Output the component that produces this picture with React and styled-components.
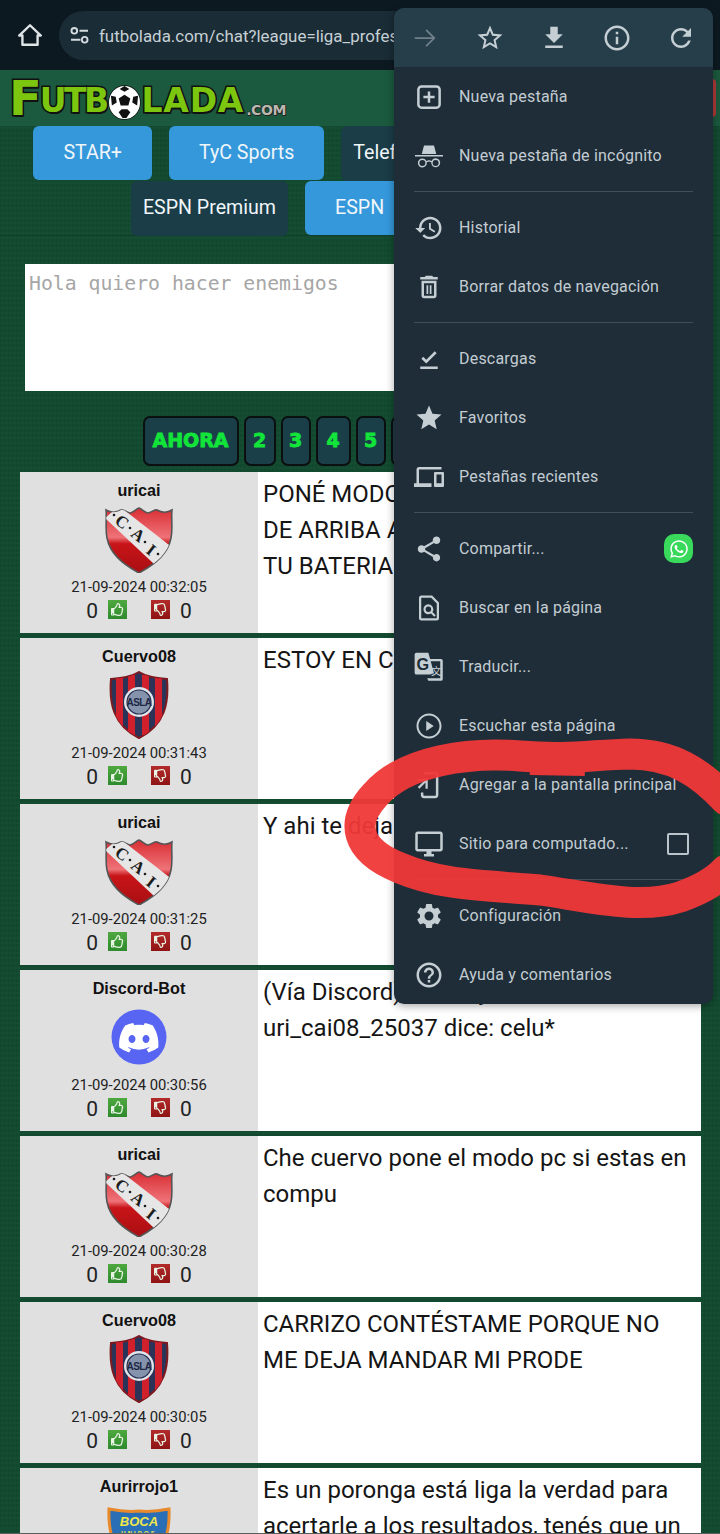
import React from "react";
import styled, { createGlobalStyle } from "styled-components";
import { FaWhatsapp, FaRegThumbsUp, FaRegThumbsDown } from "react-icons/fa";

const GlobalStyle = createGlobalStyle`
  html, body { margin: 0; padding: 0; background: #124a30; }
  * { box-sizing: border-box; }
`;

const Page = styled.div`
  position: relative;
  width: 720px;
  height: 1534px;
  overflow: hidden;
  font-family: Roboto, "Liberation Sans", sans-serif;
  background-color: #124a30;
  background-image: repeating-linear-gradient(90deg, rgba(0,0,0,.035) 0 1px, transparent 1px 4px),
    repeating-linear-gradient(0deg, rgba(255,255,255,.015) 0 2px, transparent 2px 5px);
`;

const TopBar = styled.div`
  height: 70px;
  background: #0d1921;
  display: flex;
  align-items: center;
  padding: 0 0 0 17px;
  gap: 16px;
`;

const HomeIcon = styled.svg`
  width: 26px;
  height: 26px;
  flex: none;
  fill: none;
  stroke: #dfe4e6;
  stroke-width: 2.2;
  stroke-linejoin: round;
`;

const AddressPill = styled.div`
  width: 500px;
  height: 49px;
  margin-top: 1px;
  border-radius: 25px;
  background: #1a2c36;
  display: flex;
  align-items: center;
  padding-left: 11px;
  gap: 10px;
`;

const TuneIcon = styled.svg`
  width: 19px;
  height: 17px;
  flex: none;
  fill: none;
  stroke: #d4dcdf;
  stroke-width: 2;
`;

const UrlText = styled.span`
  font-size: 16.9px;
  color: #c6d0d5;
  white-space: nowrap;
`;

const SiteHeader = styled.div`
  height: 56px;
  background: #1b5a3e;
  display: flex;
  align-items: center;
  justify-content: space-between;
  padding: 0 4px 0 12px;
`;

const Logo = styled.div`
  display: flex;
  align-items: flex-end;
  height: 42px;
  font-family: "DejaVu Sans", sans-serif;
  font-weight: 700;
  color: #7cc60f;
  -webkit-text-stroke: 3px #111;
  paint-order: stroke fill;
  text-shadow: 1px 2px 0 #111;
  white-space: nowrap;
`;

const LogoBig = styled.span`
  font-size: 48px;
  line-height: 42px;
  letter-spacing: -2px;
  margin-left: -3px;
`;

const LogoMid = styled.span`
  font-size: 33px;
  line-height: 36px;
  letter-spacing: ${({ $tight }) => ($tight ? "-2.6px" : "0.8px")};
`;

const LogoBall = styled.svg`
  width: 33px;
  height: 35px;
  flex: none;
  margin: 0 0 -1px 2px;
`;

const LogoCom = styled.span`
  font-size: 14px;
  line-height: 18px;
  margin-left: 2px;
  letter-spacing: -0.4px;
  color: #b9b9b0;
  -webkit-text-stroke: 1.2px #222;
  text-shadow: 1px 1px 0 #222;
`;

const HeaderButton = styled.div`
  width: 30px;
  height: 38px;
  border-radius: 4px;
  background: #b03a3a;
`;

const Channels = styled.div`
  display: flex;
  flex-direction: column;
  height: 110px;
  border-bottom: 1px solid #0f3f29;
`;

const ChannelRow = styled.div`
  display: flex;
  justify-content: center;
  gap: 17px;
`;

const ChannelButton = styled.div`
  height: ${({ $dark }) => ($dark ? "55px" : "54px")};
  padding: 0 ${({ $dark }) => ($dark ? "12px" : "30px")} 2px;
  width: ${({ $w }) => ($w ? `${$w}px` : "auto")};
  border-radius: 6px;
  display: flex;
  align-items: center;
  justify-content: center;
  font-size: 19.6px;
  color: #f0f6fa;
  white-space: nowrap;
  background: ${({ $dark }) => ($dark ? "#1a3d47" : "#3498db")};
`;

const Composer = styled.div`
  padding: 28px 25px 0;
`;

const MessageBox = styled.textarea`
  display: block;
  width: 670px;
  height: 127px;
  padding: 8px 4px;
  border: 0;
  border-radius: 0;
  outline: 0;
  resize: none;
  background: #fff;
  font-family: "DejaVu Sans Mono", monospace;
  font-size: 19.8px;
  line-height: 24px;
  &::placeholder { color: #a6a6a6; opacity: 1; }
`;

const Pager = styled.div`
  display: flex;
  justify-content: center;
  gap: 5px;
  padding-top: 25px;
  height: 81px;
`;

const PageButton = styled.div`
  width: ${({ $w }) => $w}px;
  height: 50px;
  padding-bottom: 2px;
  border: 2px solid #0b0f10;
  border-radius: 7px;
  background: #1b3f49;
  display: flex;
  align-items: center;
  justify-content: center;
  font-family: "DejaVu Sans", sans-serif;
  font-weight: 700;
  font-size: 19px;
  color: #12e43a;
  -webkit-text-stroke: 0.8px #12e43a;
`;

const ChatList = styled.div`
  display: flex;
  flex-direction: column;
  gap: 5px;
  padding: 0 19px 0 20px;
`;

const ChatRow = styled.div`
  display: grid;
  grid-template-columns: 238px 1fr;
  height: 161px;
  flex: none;
`;

const UserColumn = styled.div`
  background: #e0e0e0;
  display: flex;
  flex-direction: column;
  align-items: center;
  padding-top: 8px;
`;

const UserName = styled.div`
  font-family: "Liberation Sans", Arial, sans-serif;
  font-weight: 700;
  font-size: 16.2px;
  line-height: 20px;
  color: #111;
`;

const BadgeSlot = styled.div`
  height: 71px;
  margin-top: 3px;
  display: flex;
  align-items: center;
  justify-content: center;
`;

const Badge = styled.svg`
  width: 68px;
  height: 68px;
  display: block;
`;

const PostDate = styled.div`
  font-size: 14.8px;
  line-height: 18px;
  margin-top: 4px;
  color: #222;
`;

const Votes = styled.div`
  display: flex;
  align-items: center;
  margin-top: 4px;
  height: 22px;
  font-size: 21px;
  color: #222;
`;

const VoteIcon = styled.div`
  width: 19px;
  height: 19px;
  display: flex;
  align-items: center;
  justify-content: center;
  font-size: 13px;
  color: #e8f4e4;
  margin: ${({ $up }) => ($up ? "-3px 24px 0 10px" : "-3px 10px 0 0")};
  background: ${({ $up }) =>
    $up ? "linear-gradient(#4fa83f, #2d8a2d)" : "linear-gradient(#b32a2a, #8f1414)"};
`;

const MessageColumn = styled.div`
  background: #fff;
  padding: 4px 6px 0 5px;
  font-size: 24px;
  line-height: 36px;
  color: #151515;
  overflow: hidden;
  white-space: pre-line;
`;

const Menu = styled.div`
  position: absolute;
  left: 394px;
  top: 8px;
  width: 319px;
  height: 996px;
  border-radius: 10px;
  overflow: hidden;
  background: #1e2d38;
  box-shadow: 0 2px 8px rgba(0,0,0,.35);
`;

const MenuToolbar = styled.div`
  height: 59px;
  background: #263e4a;
  display: flex;
  align-items: center;
  justify-content: space-between;
  padding: 0 17px;
`;

const MenuIcon = styled.svg`
  width: 30px;
  height: 30px;
  flex: none;
  fill: ${({ $dim }) => ($dim ? "#6f8089" : "#c4ced3")};
`;

const MenuItemRow = styled.div`
  height: 59px;
  display: flex;
  align-items: center;
  padding: 0 20px;
  gap: 15px;
`;

const MenuLabel = styled.span`
  flex: 1;
  font-size: 16px;
  letter-spacing: 0.2px;
  color: #c3ccd2;
  white-space: nowrap;
`;

const MenuDivider = styled.div`
  height: 1px;
  margin: 6px 20px;
  background: #3f4f59;
`;

const WhatsAppBadge = styled.div`
  width: 29px;
  height: 29px;
  border-radius: 10px;
  background: #39d95c;
  color: #fff;
  display: flex;
  align-items: center;
  justify-content: center;
  font-size: 20px;
`;

const MenuCheckbox = styled.div`
  width: 22px;
  height: 22px;
  margin-right: 4px;
  border: 2px solid #b9c4cb;
  border-radius: 2px;
`;

const Scribble = styled.svg`
  position: absolute;
  inset: 0;
  width: 720px;
  height: 1534px;
  pointer-events: none;
`;

const NavLine = styled.div`
  position: absolute;
  left: 0;
  right: 0;
  bottom: 0;
  height: 1px;
  background: #55605c;
`;

const Icon = ({ d, children, dim }) => (
  <MenuIcon viewBox="0 0 24 24" $dim={dim}>
    {d && <path d={d} />}
    {children}
  </MenuIcon>
);

const icons = {
  star: "M22 9.24l-7.19-.62L12 2 9.19 8.63 2 9.24l5.46 4.73L5.82 21 12 17.27 18.18 21l-1.63-7.03L22 9.24zM12 15.4l-3.76 2.27 1-4.28-3.32-2.88 4.38-.38L12 6.1l1.71 4.04 4.38.38-3.32 2.88 1 4.28L12 15.4z",
  download: "M19 9h-4V3H9v6H5l7 7 7-7zM5 18v2h14v-2H5z",
  info: "M11 7h2v2h-2zm0 4h2v6h-2zm1-9C6.48 2 2 6.48 2 12s4.48 10 10 10 10-4.48 10-10S17.52 2 12 2zm0 18c-4.41 0-8-3.59-8-8s3.59-8 8-8 8 3.59 8 8-3.59 8-8 8z",
  refresh: "M17.65 6.35C16.2 4.9 14.21 4 12 4c-4.42 0-7.99 3.58-7.99 8s3.57 8 7.99 8c3.73 0 6.84-2.55 7.73-6h-2.08c-.82 2.33-3.04 4-5.65 4-3.31 0-6-2.69-6-6s2.69-6 6-6c1.66 0 3.14.69 4.22 1.78L13 11h7V4l-2.35 2.35z",
  forward: "M12.6 5l-1 1 5.3 5.300H3v1.400h13.900l-5.300 5.300 1 1 7-7z",
  history: "M13 3c-4.97 0-9 4.03-9 9H1l3.89 3.89.07.14L9 12H6c0-3.87 3.13-7 7-7s7 3.13 7 7-3.13 7-7 7c-1.93 0-3.68-.79-4.94-2.06l-1.42 1.42C8.27 19.99 10.51 21 13 21c4.97 0 9-4.03 9-9s-4.03-9-9-9zm-1 5v5l4.28 2.54.72-1.21-3.5-2.08V8H12z",
  trash: "M6 19c0 1.1.9 2 2 2h8c1.1 0 2-.9 2-2V7H6v12zM8 9h8v10H8V9zm7.5-5l-1-1h-5l-1 1H5v2h14V4zM10 10.5h1.4v7H10zM12.6 10.5H14v7h-1.4z",
  check: "M5 18h14v2H5zM9.8 15.6L5.9 11.7l1.5-1.5 2.4 2.4 6.8-6.8 1.5 1.5z",
  starFull: "M12 17.27L18.18 21l-1.64-7.03L22 9.24l-7.19-.61L12 2 9.19 8.63 2 9.24l5.46 4.73L5.82 21z",
  devices: "M4 6h18V4H4c-1.1 0-2 .9-2 2v11H0v3h14v-3H4V6zm19 2h-6c-.55 0-1 .45-1 1v10c0 .55.45 1 1 1h6c.55 0 1-.45 1-1V9c0-.55-.45-1-1-1zm-1 9h-4v-7h4v7z",
  share: "M18 16.08c-.76 0-1.44.3-1.96.77L8.91 12.7c.05-.23.09-.46.09-.7s-.04-.47-.09-.7l7.05-4.11c.54.5 1.25.81 2.04.81 1.66 0 3-1.34 3-3s-1.34-3-3-3-3 1.34-3 3c0 .24.04.47.09.7L8.04 9.81C7.5 9.31 6.79 9 6 9c-1.66 0-3 1.34-3 3s1.34 3 3 3c.79 0 1.5-.31 2.04-.81l7.12 4.16c-.05.21-.08.43-.08.65 0 1.61 1.31 2.92 2.92 2.92 1.61 0 2.92-1.31 2.92-2.92s-1.31-2.92-2.92-2.92z",
  desktop: "M21 2H3c-1.1 0-2 .9-2 2v12c0 1.1.9 2 2 2h7v2H8v2h8v-2h-2v-2h7c1.1 0 2-.9 2-2V4c0-1.1-.9-2-2-2zm0 14H3V4h18v12z",
  settings: "M19.14 12.94c.04-.3.06-.61.06-.94 0-.32-.02-.64-.07-.94l2.03-1.58c.18-.14.23-.41.12-.61l-1.92-3.32c-.12-.22-.37-.29-.59-.22l-2.39.96c-.5-.38-1.03-.7-1.62-.94l-.36-2.54c-.04-.24-.24-.41-.48-.41h-3.84c-.24 0-.43.17-.47.41l-.36 2.54c-.59.24-1.13.57-1.62.94l-2.39-.96c-.22-.08-.47 0-.59.22L2.74 8.87c-.12.21-.08.47.12.61l2.03 1.58c-.05.3-.09.63-.09.94s.02.64.07.94l-2.03 1.58c-.18.14-.23.41-.12.61l1.92 3.32c.12.22.37.29.59.22l2.39-.96c.5.38 1.03.7 1.62.94l.36 2.54c.05.24.24.41.48.41h3.84c.24 0 .44-.17.47-.41l.36-2.54c.59-.24 1.13-.56 1.62-.94l2.39.96c.22.08.47 0 .59-.22l1.92-3.32c.12-.22.07-.47-.12-.61l-2.01-1.58zM12 15.6c-1.98 0-3.6-1.62-3.6-3.6s1.62-3.6 3.6-3.6 3.6 1.62 3.6 3.6-1.62 3.6-3.6 3.6z",
  help: "M11 18h2v-2h-2v2zm1-16C6.48 2 2 6.48 2 12s4.48 10 10 10 10-4.48 10-10S17.52 2 12 2zm0 18c-4.41 0-8-3.59-8-8s3.59-8 8-8 8 3.59 8 8-3.59 8-8 8zm0-14c-2.21 0-4 1.79-4 4h2c0-1.1.9-2 2-2s2 .9 2 2c0 2-3 1.75-3 5h2c0-2.25 3-2.5 3-5 0-2.21-1.79-4-4-4z",
  play: "M12 2C6.48 2 2 6.48 2 12s4.48 10 10 10 10-4.48 10-10S17.52 2 12 2zm0 18.4c-4.63 0-8.4-3.77-8.4-8.4S7.37 3.6 12 3.6s8.4 3.77 8.4 8.4-3.77 8.4-8.4 8.4zM9.8 8v8l6-4z",
  newTab: "M6 2.5h12A3.5 3.5 0 0 1 21.5 6v12a3.5 3.5 0 0 1-3.5 3.5H6A3.5 3.5 0 0 1 2.5 18V6A3.5 3.5 0 0 1 6 2.5zM6 4.5A1.5 1.5 0 0 0 4.5 6v12A1.5 1.5 0 0 0 6 19.5h12a1.5 1.5 0 0 0 1.5-1.5V6A1.5 1.5 0 0 0 18 4.5zM11 7.5h2V11h3.5v2H13v3.5h-2V13H7.5v-2H11z",
  incognito: "M8 3.500h8l1.800 6.800H6.200zM.800 11.200h22.400v1.200H.800zM6.700 14a3.600 3.600 0 1 0 0 7.200 3.600 3.600 0 0 0 3.500-4.300c.9-.5 2.700-.5 3.600 0a3.600 3.600 0 1 0 .3-1c-1.100-.6-3-.6-4.200 0A3.600 3.600 0 0 0 6.700 14zm0 1.200a2.400 2.400 0 1 1 0 4.800 2.400 2.400 0 0 1 0-4.800zm10.600 0a2.400 2.400 0 1 1 0 4.800 2.400 2.400 0 0 1 0-4.800z",
  findPage: "M6 2h8.500L20 7.500V20a2 2 0 0 1-2 2H6a2 2 0 0 1-2-2V4a2 2 0 0 1 2-2zm0 1.800a.2.2 0 0 0-.2.2v16c0 .1.1.2.2.2h12a.2.2 0 0 0 .2-.2V8.300l-4.500-4.500zM11.500 9a4 4 0 0 1 3.300 6.200l2.600 2.600-1.200 1.200-2.600-2.600A4 4 0 1 1 11.500 9zm0 1.800a2.200 2.200 0 1 0 0 4.400 2.200 2.200 0 0 0 0-4.400z",
  addHome: "M8 1.500h9a2.500 2.500 0 0 1 2.500 2.500v16a2.500 2.500 0 0 1-2.500 2.500H8A2.500 2.500 0 0 1 5.500 20v-2h2v2a.5.5 0 0 0 .5.5h9a.5.5 0 0 0 .5-.5V4a.5.5 0 0 0-.5-.5H8V1.500zM3 7h8v8H9.200V10L4.300 14.900 3 13.600 8 8.800H3z",
};

const MenuItem = ({ icon, label, children }) => (
  <MenuItemRow>
    {icon}
    <MenuLabel>{label}</MenuLabel>
    {children}
  </MenuItemRow>
);

const TranslateIcon = () => (
  <Icon>
    <path d="M11.500 5.500H21.500A1.500 1.500 0 0 1 23 7V21.500A1.500 1.500 0 0 1 21.500 23H11.500L10.500 21H21V7.300H12z" />
    <path d="M2 .500h9.500L16 17l-3.200 1H2A1.500 1.500 0 0 1 .500 16.500V2A1.500 1.500 0 0 1 2 .500z" />
    <text x="2" y="14" fontFamily="Liberation Sans" fontWeight="700" fontSize="13" fill="#1e2d38">G</text>
    <text x="13.500" y="18" fontFamily="Noto Sans CJK SC" fontSize="8.500" fill="#c4ced3">文</text>
  </Icon>
);

const CaiBadge = () => (
  <Badge viewBox="0 0 68 68">
    <defs>
      <linearGradient id="caiRed" x1="0" y1="0" x2="0" y2="1">
        <stop offset="0" stopColor="#d92d33" />
        <stop offset="0.45" stopColor="#ee7378" />
        <stop offset="0.55" stopColor="#c81519" />
        <stop offset="1" stopColor="#a90e12" />
      </linearGradient>
      <clipPath id="caiClip">
        <path d="M1 5c5 3 10 3 15 0 3-1 6 3 9 3s6-4 9-5c3 1 6 5 9 5s6-4 9-3c5 3 10 3 15 0-1 8 1 18-1 28-3 15-14 25-32 35C16 58 5 48 2 33 0 23 2 13 1 5z" />
      </clipPath>
    </defs>
    <path d="M1 5c5 3 10 3 15 0 3-1 6 3 9 3s6-4 9-5c3 1 6 5 9 5s6-4 9-3c5 3 10 3 15 0-1 8 1 18-1 28-3 15-14 25-32 35C16 58 5 48 2 33 0 23 2 13 1 5z" fill="url(#caiRed)" stroke="#555" strokeWidth="1.600" />
    <g clipPath="url(#caiClip)">
      <path d="M14 1L68 43 49 59 0 13z" fill="#e6e6e6" />
      <g fill="#1c1c1c">
        <circle cx="9" cy="10" r="1.300" />
        <circle cx="25" cy="23" r="1.300" />
        <circle cx="40" cy="37" r="1.300" />
        <circle cx="53" cy="49" r="1.300" />
      </g>
      <g fontFamily="Liberation Serif" fontWeight="700" fontSize="17" fill="#1c1c1c" textAnchor="middle">
        <text x="17" y="22.500" transform="rotate(38 17 17)">C</text>
        <text x="33" y="35.500" transform="rotate(38 33 30)">A</text>
        <text x="46" y="50.500" transform="rotate(38 46 45)">I</text>
      </g>
    </g>
  </Badge>
);

const SanLorenzoBadge = () => (
  <Badge viewBox="0 0 68 68">
    <defs>
      <clipPath id="casla">
        <path d="M6 8c11-1 20-2 28-7 8 5 17 6 28 7 2 24-2 46-28 59C8 54 4 32 6 8z" />
      </clipPath>
    </defs>
    <path d="M6 8c11-1 20-2 28-7 8 5 17 6 28 7 2 24-2 46-28 59C8 54 4 32 6 8z" fill="#2b3458" stroke="#7c1a20" strokeWidth="2" />
    <g clipPath="url(#casla)" fill="#d0202c">
      <rect x="11" y="6" width="7" height="50" />
      <rect x="23" y="4" width="7" height="60" />
      <rect x="37" y="4" width="7" height="60" />
      <rect x="50" y="6" width="7" height="50" />
    </g>
    <circle cx="34" cy="31" r="15" fill="#dfe3ea" />
    <circle cx="34" cy="31" r="12" fill="#8593ad" stroke="#27304f" strokeWidth="1.200" />
    <text x="34" y="35" textAnchor="middle" fontFamily="Liberation Sans" fontWeight="700" fontSize="10" fill="#1d2745" letterSpacing="-0.600">ASLA</text>
  </Badge>
);

const DiscordBadge = () => (
  <Badge viewBox="0 0 68 68">
    <circle cx="34" cy="34" r="27.500" fill="#5865f2" />
    <path d="M47.800 22.500a32 32 0 0 0-8-2.500l-1 2.100a30 30 0 0 0-9.600 0l-1-2.100a32 32 0 0 0-8 2.500C15 30 13.600 37.300 14.300 44.500a32 32 0 0 0 9.800 5l2-3.200a20 20 0 0 1-3.200-1.500l.8-.6a23 23 0 0 0 20.200 0l.8.600a20 20 0 0 1-3.200 1.500l2 3.200a32 32 0 0 0 9.800-5c.8-8.300-1.400-15.600-5.500-22zM27 40c-2 0-3.500-1.800-3.500-4s1.500-4 3.500-4 3.600 1.800 3.500 4c0 2.200-1.500 4-3.500 4zm14 0c-2 0-3.500-1.800-3.500-4s1.500-4 3.500-4 3.600 1.800 3.500 4c0 2.200-1.500 4-3.500 4z" fill="#fff" />
  </Badge>
);

const BocaBadge = () => (
  <Badge viewBox="0 0 68 68">
    <path d="M4 8c10 2 20 3 30 2 10 1 20 0 30-2 1 24-4 44-30 58C8 52 3 32 4 8z" fill="#2a6fb5" stroke="#e88a2c" strokeWidth="3" />
    <text x="34" y="25" textAnchor="middle" fontFamily="Liberation Sans" fontWeight="700" fontStyle="italic" fontSize="13" fill="#f2e84a">BOCA</text>
    <text x="34" y="34" textAnchor="middle" fontFamily="Liberation Sans" fontWeight="700" fontSize="6" letterSpacing="2" fill="#f2e84a">UNIDOS</text>
  </Badge>
);

const badges = { cai: CaiBadge, casla: SanLorenzoBadge, discord: DiscordBadge, boca: BocaBadge };

const posts = [
  { name: "uricai", badge: "cai", date: "21-09-2024 00:32:05", text: "PONÉ MODO PC EN LOS\nDE ARRIBA ASÍ AHORRÁS\nTU BATERIA" },
  { name: "Cuervo08", badge: "casla", date: "21-09-2024 00:31:43", text: "ESTOY EN CELU" },
  { name: "uricai", badge: "cai", date: "21-09-2024 00:31:25", text: "Y ahi te deja" },
  { name: "Discord-Bot", badge: "discord", date: "21-09-2024 00:30:56", text: "(Vía Discord) Mensaje de Discord,\nuri_cai08_25037 dice: celu*" },
  { name: "uricai", badge: "cai", date: "21-09-2024 00:30:28", text: "Che cuervo pone el modo pc si estas en\ncompu" },
  { name: "Cuervo08", badge: "casla", date: "21-09-2024 00:30:05", text: "CARRIZO CONTÉSTAME PORQUE NO\nME DEJA MANDAR MI PRODE" },
  { name: "Aurirrojo1", badge: "boca", date: "21-09-2024 00:29:40", text: "Es un poronga está liga la verdad para\nacertarle a los resultados, tenés que un" },
];

const ChatPost = ({ name, badge, date, text }) => {
  const Crest = badges[badge];
  return (
    <ChatRow>
      <UserColumn>
        <UserName>{name}</UserName>
        <BadgeSlot><Crest /></BadgeSlot>
        <PostDate>{date}</PostDate>
        <Votes>
          0
          <VoteIcon $up><FaRegThumbsUp /></VoteIcon>
          <VoteIcon><FaRegThumbsDown /></VoteIcon>
          0
        </Votes>
      </UserColumn>
      <MessageColumn>{text}</MessageColumn>
    </ChatRow>
  );
};

export default function App() {
  return (
    <>
      <GlobalStyle />
      <Page>
        <TopBar>
          <HomeIcon viewBox="0 0 24 24">
            <path d="M2 12.500L12 3l10 9.500h-3V21H5v-8.500z" />
          </HomeIcon>
          <AddressPill>
            <TuneIcon viewBox="0 0 20 18">
              <circle cx="4.500" cy="4" r="3" />
              <path d="M10 4h9M1 13.500h10" />
              <circle cx="15.500" cy="13.500" r="3" />
            </TuneIcon>
            <UrlText>futbolada.com/chat?league=liga_profesional</UrlText>
          </AddressPill>
        </TopBar>

        <SiteHeader>
          <Logo>
            <LogoBig>F</LogoBig>
            <LogoMid $tight>UTB</LogoMid>
            <LogoBall viewBox="0 0 34 36">
              <ellipse cx="17" cy="18" rx="16" ry="17" fill="#fff" stroke="#111" strokeWidth="1.500" />
              <path d="M17 10l6 4-2 7h-8l-2-7zM17 1l5 3-5 3-5-3zM3 11l5 1 1 6-5 3zM31 11l-5 1-1 6 5 3zM11 28l4 6h4l4-6-3-3h-6z" fill="#111" />
            </LogoBall>
            <LogoMid>LADA</LogoMid>
            <LogoCom>.COM</LogoCom>
          </Logo>
          <HeaderButton />
        </SiteHeader>

        <Channels>
          <ChannelRow>
            <ChannelButton>STAR+</ChannelButton>
            <ChannelButton>TyC Sports</ChannelButton>
            <ChannelButton $dark>Telefe</ChannelButton>
            <ChannelButton $w={251}>DirecTV Sports</ChannelButton>
          </ChannelRow>
          <ChannelRow>
            <ChannelButton $dark>ESPN Premium</ChannelButton>
            <ChannelButton>ESPN</ChannelButton>
            <ChannelButton $w={158}>Fox Sports</ChannelButton>
          </ChannelRow>
        </Channels>

        <Composer>
          <MessageBox placeholder="Hola quiero hacer enemigos" />
        </Composer>

        <Pager>
          <PageButton $w={96}>AHORA</PageButton>
          <PageButton $w={32}>2</PageButton>
          <PageButton $w={30}>3</PageButton>
          <PageButton $w={35}>4</PageButton>
          <PageButton $w={30}>5</PageButton>
          <PageButton $w={30}>6</PageButton>
          <PageButton $w={30}>7</PageButton>
          <PageButton $w={30}>8</PageButton>
          <PageButton $w={30}>9</PageButton>
          <PageButton $w={47}>10</PageButton>
        </Pager>

        <ChatList>
          {posts.map((post) => (
            <ChatPost key={post.date} {...post} />
          ))}
        </ChatList>

        <Menu>
          <MenuToolbar>
            <Icon d={icons.forward} dim />
            <Icon d={icons.star} />
            <Icon d={icons.download} />
            <Icon d={icons.info} />
            <Icon d={icons.refresh} />
          </MenuToolbar>
          <MenuItem icon={<Icon d={icons.newTab} />} label="Nueva pestaña" />
          <MenuItem icon={<Icon d={icons.incognito} />} label="Nueva pestaña de incógnito" />
          <MenuDivider />
          <MenuItem icon={<Icon d={icons.history} />} label="Historial" />
          <MenuItem icon={<Icon d={icons.trash} />} label="Borrar datos de navegación" />
          <MenuDivider />
          <MenuItem icon={<Icon d={icons.check} />} label="Descargas" />
          <MenuItem icon={<Icon d={icons.starFull} />} label="Favoritos" />
          <MenuItem icon={<Icon d={icons.devices} />} label="Pestañas recientes" />
          <MenuDivider />
          <MenuItem icon={<Icon d={icons.share} />} label="Compartir...">
            <WhatsAppBadge><FaWhatsapp /></WhatsAppBadge>
          </MenuItem>
          <MenuItem icon={<Icon d={icons.findPage} />} label="Buscar en la página" />
          <MenuItem icon={<TranslateIcon />} label="Traducir..." />
          <MenuItem icon={<Icon d={icons.play} />} label="Escuchar esta página" />
          <MenuItem icon={<Icon d={icons.addHome} />} label="Agregar a la pantalla principal" />
          <MenuItem icon={<Icon d={icons.desktop} />} label="Sitio para computado...">
            <MenuCheckbox />
          </MenuItem>
          <MenuDivider />
          <MenuItem icon={<Icon d={icons.settings} />} label="Configuración" />
          <MenuItem icon={<Icon d={icons.help} />} label="Ayuda y comentarios" />
        </Menu>

        <Scribble viewBox="0 0 720 1534">
          <g fill="none" stroke="#f03838" strokeWidth="31" strokeLinecap="round" opacity="0.95">
            <path d="M726 800C700 772 672 754 630 754C590 755 570 760 520 756C470 752 405 760 375 795C350 822 355 850 400 868C440 885 480 885 540 890C590 897 640 910 680 897C700 890 715 882 726 870" />
            <path d="M530 762L585 763" strokeWidth="26" strokeLinecap="butt" />
          </g>
        </Scribble>
        <NavLine />
      </Page>
    </>
  );
}
